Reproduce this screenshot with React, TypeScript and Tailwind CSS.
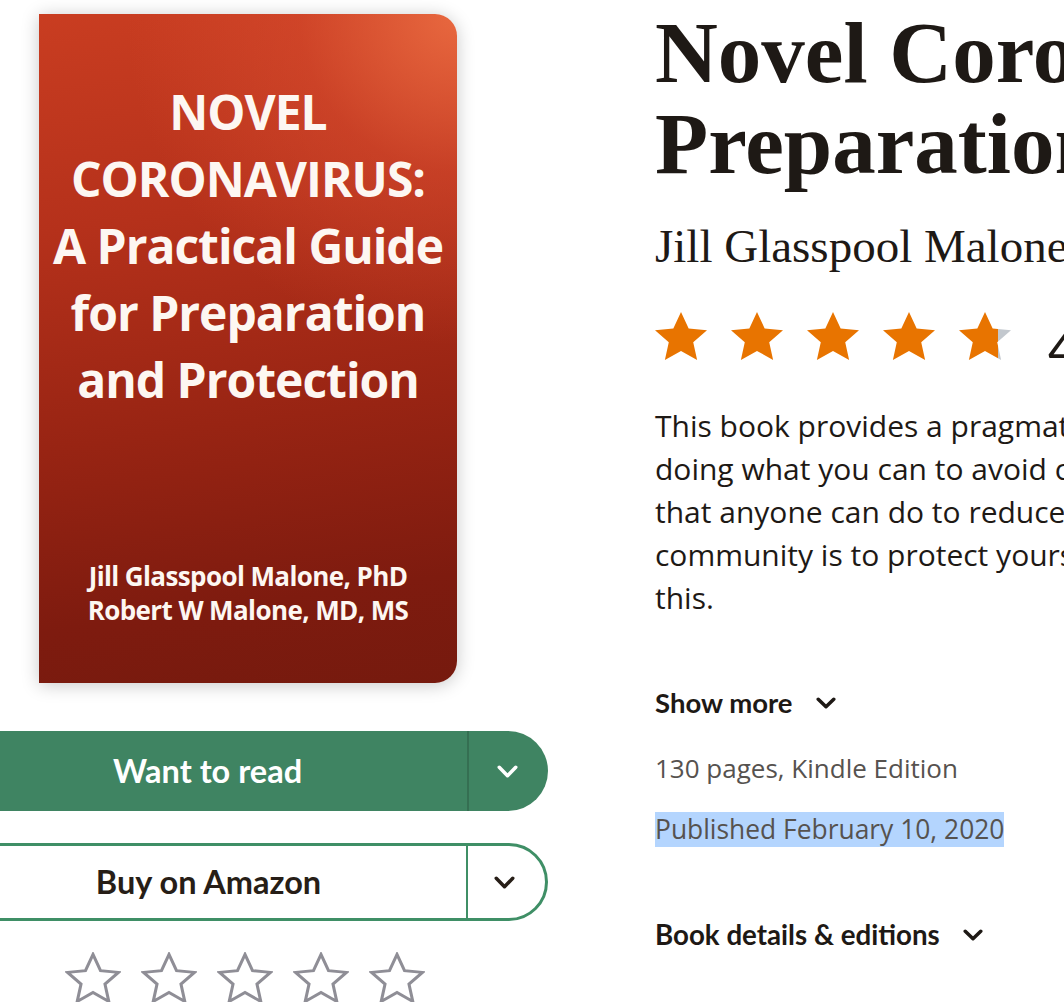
import React from "react";

const STAR = "M12 2.2l2.95 6.6 7.05.72-5.3 4.78 1.5 7.05L12 17.72l-6.2 3.63 1.5-7.05L2 9.52l7.05-.72L12 2.2z";

function FilledStar({ fill = 1, id }: { fill?: number; id: string }) {
  return (
    <svg width="52" height="48" viewBox="2 2.2 20 19.15" preserveAspectRatio="none">
      <defs>
        <linearGradient id={id} x1="0" x2="1" y1="0" y2="0">
          <stop offset={fill} stopColor="#e87400" />
          <stop offset={fill} stopColor="#c3c8ce" />
        </linearGradient>
      </defs>
      <path d={STAR} fill={`url(#${id})`} />
    </svg>
  );
}

function EmptyStar() {
  return (
    <svg width="56" height="52" viewBox="1 1.2 22 21.2" preserveAspectRatio="none">
      <path d={STAR} fill="none" stroke="#8f8e96" strokeWidth="1.2" strokeLinejoin="miter" />
    </svg>
  );
}

function Chevron({ color, w = 20, h = 12, sw = 3.5 }: { color: string; w?: number; h?: number; sw?: number }) {
  return (
    <svg width={w} height={h} viewBox={`0 0 ${w} ${h}`}>
      <polyline
        points={`${sw / 2 + 0.5},${sw / 2 + 0.5} ${w / 2},${h - sw / 2 - 0.5} ${w - sw / 2 - 0.5},${sw / 2 + 0.5}`}
        fill="none"
        stroke={color}
        strokeWidth={sw}
        strokeLinecap="round"
        strokeLinejoin="round"
      />
    </svg>
  );
}

export default function App() {
  const lato = "font-['Lato','Liberation_Sans',sans-serif]";
  const open = "font-['Open_Sans','Noto_Sans',sans-serif]";
  return (
    <div className="w-[1064px] h-[1002px] overflow-hidden bg-white">
      <div className="flex items-start ml-[-52px] gap-[107px]">
        {/* Left column */}
        <div className="w-[600px] shrink-0 flex flex-col items-center pt-[14px]">
          <div className="w-[418px] h-[669px] rounded-r-[22px] shadow-[0_2px_18px_rgba(0,0,0,0.22)] bg-[radial-gradient(circle_at_100%_0%,#e8683f_0%,rgba(220,80,50,0.45)_20%,transparent_42%),linear-gradient(172deg,#c93d21_0%,#b5311b_30%,#982413_60%,#7e1b0f_85%,#761a0e_100%)] flex flex-col items-center text-[#fdf7f2] font-['Open_Sans','Noto_Sans',sans-serif]">
            <div className="pt-[64px] text-[48px] leading-[67px] font-bold text-center whitespace-nowrap tracking-[-1px]">
              <div>NOVEL</div>
              <div>CORONAVIRUS:</div>
              <div>A Practical Guide</div>
              <div>for Preparation</div>
              <div>and Protection</div>
            </div>
            <div className="mt-[146px] text-[26px] leading-[34px] font-bold text-center whitespace-nowrap tracking-[-0.6px]">
              <div>Jill Glasspool Malone, PhD</div>
              <div>Robert W Malone, MD, MS</div>
            </div>
          </div>

          <div className={`mt-[48px] w-full h-[80px] rounded-full bg-[#3f8462] flex items-stretch ${lato}`}>
            <div className="flex-1 flex items-center justify-center text-white text-[32.5px] font-bold">
              Want to read
            </div>
            <div className="w-[2px] bg-[#356f52]" />
            <div className="w-[79px] flex items-center justify-center pr-[2px]">
              <Chevron color="#ffffff" w={21} h={13} />
            </div>
          </div>

          <div className={`mt-[32px] w-full h-[78px] rounded-full border-[3px] border-[#3f8f66] bg-white flex items-stretch ${lato}`}>
            <div className="flex-1 flex items-center justify-center text-[#271e17] text-[32.5px] font-bold">
              Buy on Amazon
            </div>
            <div className="w-[2px] bg-[#3f8f66]" />
            <div className="w-[77px] flex items-center justify-center pr-[4px]">
              <Chevron color="#271e17" w={21} h={13} />
            </div>
          </div>

          <div className="mt-[31px] flex gap-[20px] mr-[6px]">
            <EmptyStar />
            <EmptyStar />
            <EmptyStar />
            <EmptyStar />
            <EmptyStar />
          </div>
        </div>

        {/* Right column */}
        <div className="w-[900px] shrink-0 pt-[7px] text-[#1e1915]">
          <h1 className="font-['Liberation_Serif','Times_New_Roman',serif] font-bold text-[87px] leading-[91px] whitespace-nowrap">
            Novel Coronavirus: A Practical Guide for
            <br />
            Preparation and Protection
          </h1>
          <div className="mt-[32px] font-['Liberation_Serif','Times_New_Roman',serif] text-[47px] leading-[50px] whitespace-nowrap">
            Jill Glasspool Malone, Robert W. Malone
          </div>

          <div className="mt-[41px] h-[47px] flex items-start">
            <div className="flex gap-[24px]">
              <FilledStar id="s1" />
              <FilledStar id="s2" />
              <FilledStar id="s3" />
              <FilledStar id="s4" />
              <FilledStar id="s5" fill={0.75} />
            </div>
            <div className={`ml-[37px] mt-[10px] text-[52px] leading-[52px] ${lato}`}>4.73</div>
          </div>

          <div className={`mt-[45px] text-[30px] leading-[43px] whitespace-nowrap ${open}`}>
            <div>This book provides a pragmatic, practical guide to</div>
            <div>doing what you can to avoid coronavirus infection. The</div>
            <div>that anyone can do to reduce risk to themselves and their</div>
            <div>community is to protect yourself and your family from</div>
            <div>this.</div>
          </div>

          <div className={`mt-[66px] h-[36px] flex items-center gap-[23px] text-[27.5px] leading-[36px] font-bold ${lato}`}>
            <span>Show more</span>
            <Chevron color="#1e1915" w={20} h={12} sw={3.5} />
          </div>

          <div className={`mt-[29px] text-[26px] leading-[36px] text-[#56524f] whitespace-nowrap ${open}`}>
            130 pages, Kindle Edition
          </div>
          <div className={`mt-[26px] text-[26.4px] leading-[35px] text-[#56524f] whitespace-nowrap ${open}`}>
            <span className="inline-block bg-[#b4d5fe]">Published February 10, 2020</span>
          </div>

          <div className={`mt-[70px] h-[36px] flex items-center gap-[23px] text-[27.7px] leading-[36px] font-bold ${lato}`}>
            <span>Book details &amp; editions</span>
            <Chevron color="#1e1915" w={20} h={12} sw={3.5} />
          </div>
        </div>
      </div>
    </div>
  );
}
